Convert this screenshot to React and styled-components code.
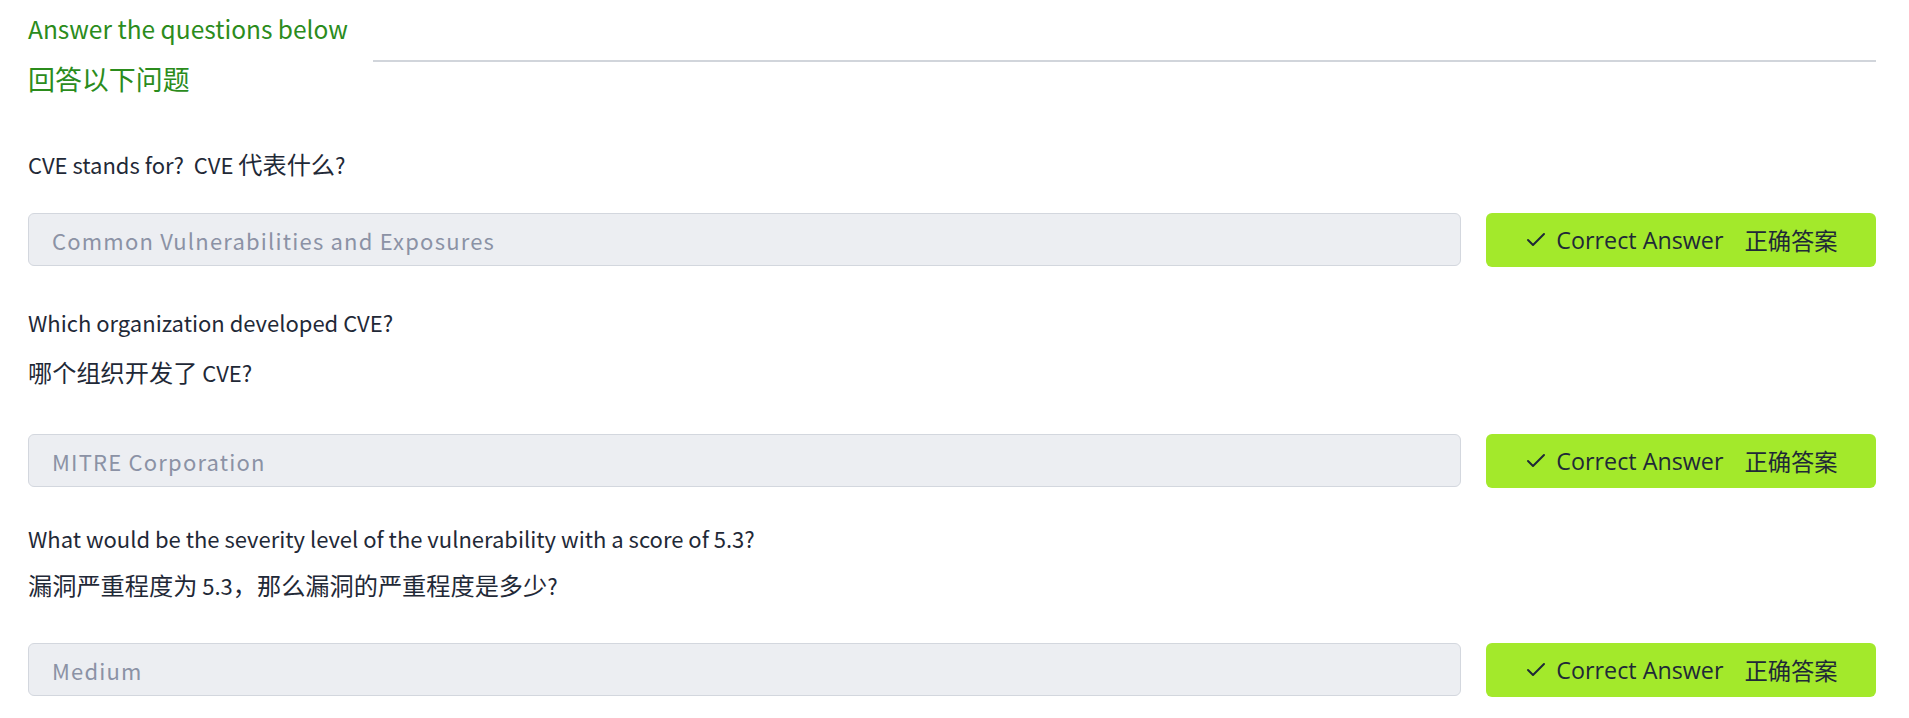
import React from 'react';
import styled, { createGlobalStyle } from 'styled-components';
import { Check } from 'lucide-react';

const GlobalStyle = createGlobalStyle`
  body {
    margin: 0;
    background: #ffffff;
  }
`;

const questions = [
  {
    lines: ['CVE stands for?  CVE 代表什么?'],
    answer: 'Common Vulnerabilities and Exposures',
    top: 46,
    lineGap: 0,
    answerGap: 31,
  },
  {
    lines: ['Which organization developed CVE?', '哪个组织开发了 CVE?'],
    answer: 'MITRE Corporation',
    top: 37,
    lineGap: 14,
    answerGap: 44,
  },
  {
    lines: [
      'What would be the severity level of the vulnerability with a score of 5.3?',
      '漏洞严重程度为 5.3，那么漏洞的严重程度是多少?',
    ],
    answer: 'Medium',
    top: 32,
    lineGap: 11,
    answerGap: 40,
  },
];

// the latin glyphs of the CJK font run large, so han runs get a bit more size
const hanRun = /([\u3000-\u303f\u4e00-\u9fff\uff00-\uffef]+)/;

const Mixed = ({ text }) =>
  text
    .split(hanRun)
    .filter(Boolean)
    .map((part, i) => (hanRun.test(part) ? <Han key={i}>{part}</Han> : part));

const App = () => {
  return (
    <Page>
      <GlobalStyle />
      <Header>
        <TitleBlock>
          <Title>Answer the questions below</Title>
          <Title>
            <Mixed text="回答以下问题" />
          </Title>
        </TitleBlock>
        <Rule />
      </Header>

      {questions.map((q) => (
        <QuestionBlock key={q.answer} $top={q.top}>
          <QuestionText $gap={q.lineGap}>
            {q.lines.map((line) => (
              <QuestionLine key={line}>
                <Mixed text={line} />
              </QuestionLine>
            ))}
          </QuestionText>
          <AnswerRow $gap={q.answerGap}>
            <AnswerField readOnly value={q.answer} />
            <SubmitButton type="button">
              <Check size={24} strokeWidth={2} />
              <span>Correct Answer</span>
              <ZhLabel>正确答案</ZhLabel>
            </SubmitButton>
          </AnswerRow>
        </QuestionBlock>
      ))}
    </Page>
  );
};

const Page = styled.div`
  padding: 9px 33px 0 28px;
  font-family: 'Noto Sans CJK SC', 'Noto Sans', sans-serif;
  color: #1f2937;
`;

const Header = styled.div`
  display: flex;
  align-items: flex-start;
`;

const TitleBlock = styled.div`
  display: flex;
  flex-direction: column;
  gap: 11px;
`;

const Title = styled.h2`
  margin: 0;
  font-size: 24.5px;
  font-weight: 400;
  line-height: 40px;
  color: #2b8c1c;
  white-space: nowrap;
`;

const Han = styled.span`
  font-size: 1.1em;
  line-height: 0;
`;

const Rule = styled.div`
  flex: 1;
  height: 2px;
  margin: 51px 0 0 25px;
  background: #d1d5db;
`;

const QuestionBlock = styled.div`
  margin-top: ${(p) => p.$top}px;
`;

const QuestionText = styled.div`
  display: flex;
  flex-direction: column;
  gap: ${(p) => p.$gap}px;
`;

const QuestionLine = styled.p`
  margin: 0;
  font-size: 22px;
  line-height: 36px;
  white-space: pre-wrap;
  color: #1f2937;
`;

const AnswerRow = styled.div`
  display: flex;
  align-items: flex-start;
  gap: 25px;
  margin-top: ${(p) => p.$gap}px;
`;

const AnswerField = styled.input`
  flex: 1;
  min-width: 0;
  height: 53px;
  box-sizing: border-box;
  padding: 0 23px;
  border: 1px solid #d3d7de;
  border-radius: 6px;
  background: #eceef2;
  font-family: 'Noto Sans CJK SC', 'Noto Sans', sans-serif;
  font-size: 22px;
  letter-spacing: 1.2px;
  color: #8b92a5;
  outline: none;
`;

const SubmitButton = styled.button`
  width: 390px;
  height: 54px;
  flex-shrink: 0;
  display: flex;
  align-items: center;
  justify-content: center;
  gap: 8px;
  border: none;
  border-radius: 6px;
  background: #a3e92b;
  color: #1f2937;
  font-family: 'Open Sans', 'Noto Sans CJK SC', sans-serif;
  font-size: 23.3px;
  cursor: pointer;
  padding: 0;
`;

const ZhLabel = styled.span`
  margin-left: 13px;
  font-family: 'Noto Sans CJK SC', sans-serif;
`;

export default App;
